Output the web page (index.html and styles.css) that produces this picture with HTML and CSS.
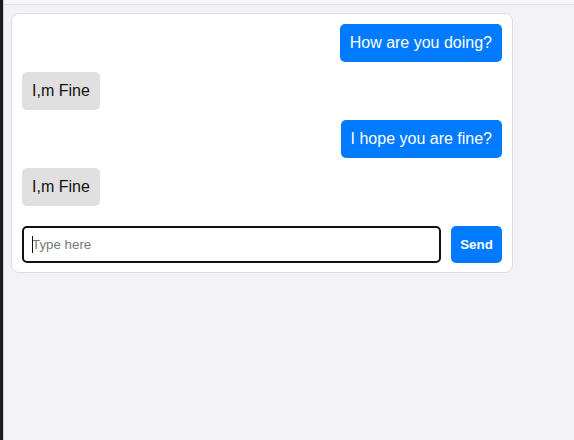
FILE: index.html
```html
<!DOCTYPE html>
<html>
<head>
<meta charset="utf-8">
<link rel="stylesheet" href="styles.css">
</head>
<body>
<div class="shell">
  <div class="side"></div>
  <div class="main">
    <div class="topbar"></div>
    <div class="content">
      <div class="chat">
        <div class="messages">
          <div class="msg sent">How are you doing?</div>
          <div class="msg recv">I,m Fine</div>
          <div class="msg sent">I hope you are fine?</div>
          <div class="msg recv">I,m Fine</div>
        </div>
        <div class="composer">
          <div class="field"><span class="caret"></span><input class="input" type="text" placeholder="Type here"></div>
          <button class="send">Send</button>
        </div>
      </div>
    </div>
  </div>
</div>
</body>
</html>
```
FILE: styles.css
```css
html, body {
  margin: 0;
  height: 100%;
}
body {
  font-family: "Liberation Sans", Arial, sans-serif;
  background: #f3f3f7;
}
.shell {
  display: flex;
  height: 100%;
}
.side {
  width: 3px;
  background: #1c1c1c;
  border-right: 1px solid #d0d0d4;
  flex: none;
}
.main {
  flex: 1;
  display: flex;
  flex-direction: column;
}
.topbar {
  height: 4px;
  background: #f6f6f8;
  border-bottom: 1px solid #e2e2e4;
}
.content {
  padding: 8px 0 0 7px;
}
.chat {
  width: 480px;
  height: 238px;
  background: #fff;
  border: 1px solid #dcdcdc;
  border-radius: 8px;
  padding: 10px;
  display: flex;
  flex-direction: column;
}
.messages {
  display: flex;
  flex-direction: column;
  gap: 10px;
  margin-bottom: 20px;
}
.msg {
  font-size: 16px;
  line-height: 18px;
  padding: 10px;
  border-radius: 5px;
}
.sent {
  align-self: flex-end;
  background: #007bff;
  color: #fff;
}
.recv {
  align-self: flex-start;
  background: #e0e0e0;
  color: #111;
}
.composer {
  display: flex;
  gap: 10px;
  height: 37px;
}
.field {
  flex: 1;
  position: relative;
  display: flex;
}
.input {
  flex: 1;
  box-sizing: border-box;
  height: 37px;
  border: 2px solid #111;
  border-radius: 5px;
  padding: 0 8px;
  font-family: "Liberation Sans", Arial, sans-serif;
  font-size: 13.33px;
  outline: none;
}
.input::placeholder {
  color: #777;
}
.caret {
  position: absolute;
  left: 10px;
  top: 10px;
  width: 1px;
  height: 17px;
  background: #111;
}
.send {
  width: 51px;
  height: 37px;
  border: none;
  border-radius: 5px;
  background: #007bff;
  color: #fff;
  font-family: "Liberation Sans", Arial, sans-serif;
  font-size: 13.33px;
  font-weight: bold;
  padding: 0;
}
```
